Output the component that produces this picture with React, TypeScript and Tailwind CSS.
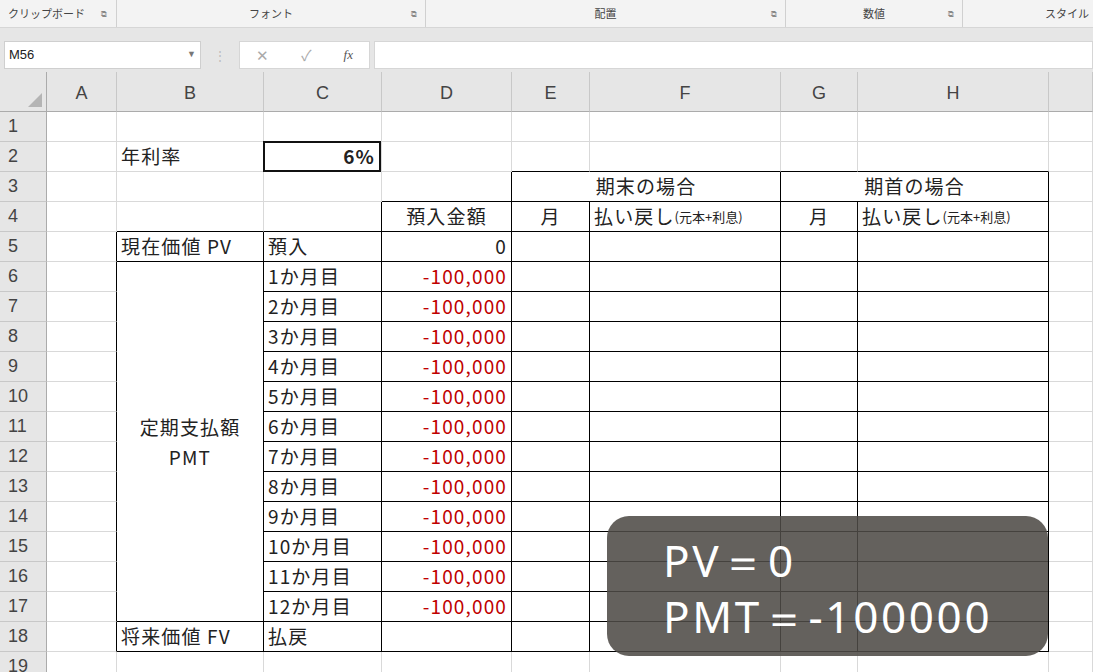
import React from "react"

const cols = [70, 147, 118, 130, 78, 191, 77, 191, 44]
const letters = ["A", "B", "C", "D", "E", "F", "G", "H", ""]
const font = { fontFamily: '"Noto Sans CJK JP", "Noto Sans", sans-serif' }

type Cell = { r: number; c: number; rs?: number; cs?: number; text?: string; align?: string; red?: boolean; small?: React.ReactNode }

// table region: rows 3-18, cols (1=A..8=H)
function inTable(r: number, c: number) {
  if (r === 3) return c >= 5 && c <= 8
  if (r === 4) return c >= 4 && c <= 8
  if (r >= 5 && r <= 18) return c >= 2 && c <= 8
  return false
}

export default function App() {
  const cells: Cell[] = []
  const merged = new Set<string>()
  const add = (cell: Cell) => {
    cells.push(cell)
    for (let i = 0; i < (cell.rs || 1); i++)
      for (let j = 0; j < (cell.cs || 1); j++) merged.add(`${cell.r + i}-${cell.c + j}`)
  }
  add({ r: 2, c: 2, text: "年利率", align: "left" })
  add({ r: 3, c: 5, cs: 2, text: "期末の場合", align: "center" })
  add({ r: 3, c: 7, cs: 2, text: "期首の場合", align: "center" })
  add({ r: 4, c: 4, text: "預入金額", align: "center" })
  add({ r: 4, c: 5, text: "月", align: "center" })
  add({ r: 4, c: 6, small: <>払い戻し<span className="text-[13px] tracking-normal">(元本+利息)</span></>, align: "left" })
  add({ r: 4, c: 7, text: "月", align: "center" })
  add({ r: 4, c: 8, small: <>払い戻し<span className="text-[13px] tracking-normal">(元本+利息)</span></>, align: "left" })
  add({ r: 5, c: 2, text: "現在価値 PV", align: "left" })
  add({ r: 5, c: 3, text: "預入", align: "left" })
  add({ r: 5, c: 4, text: "0", align: "right" })
  add({ r: 6, c: 2, rs: 12, small: <div className="text-center leading-[30px]">定期支払額<br />PMT</div>, align: "center" })
  for (let m = 1; m <= 12; m++) {
    add({ r: 5 + m, c: 3, text: `${m}か月目`, align: "left" })
    add({ r: 5 + m, c: 4, text: "-100,000", align: "right", red: true })
  }
  add({ r: 18, c: 2, text: "将来価値 FV", align: "left" })
  add({ r: 18, c: 3, text: "払戻", align: "left" })

  const all: Cell[] = [...cells]
  for (let r = 1; r <= 19; r++)
    for (let c = 1; c <= 9; c++) if (!merged.has(`${r}-${c}`)) all.push({ r, c })

  const rowsCount = 19

  return (
    <div className="w-[1093px] h-[672px] overflow-hidden bg-white relative text-[#222]" style={font}>
      {/* ribbon */}
      <div className="h-[28px] bg-[#f3f3f3] border-b border-[#d6d6d6] flex text-[11px] text-[#444]">
        <div className="w-[117px] border-r border-[#d0d0d0] flex items-center pl-2 gap-4"><span>クリップボード</span><span className="text-[8px] text-[#888]">⧉</span></div>
        <div className="w-[309px] border-r border-[#d0d0d0] flex items-center justify-center relative">フォント<span className="absolute right-2 text-[8px] text-[#888]">⧉</span></div>
        <div className="w-[360px] border-r border-[#d0d0d0] flex items-center justify-center relative">配置<span className="absolute right-2 text-[8px] text-[#888]">⧉</span></div>
        <div className="w-[177px] border-r border-[#d0d0d0] flex items-center justify-center relative">数値<span className="absolute right-2 text-[8px] text-[#888]">⧉</span></div>
        <div className="flex-1 flex items-center justify-end pr-1">スタイル</div>
      </div>
      {/* formula bar */}
      <div className="h-[44px] bg-[#e6e6e6] flex items-start pt-[13px] gap-1 pl-[4px]">
        <div className="w-[197px] h-[28px] bg-white border border-[#cfcfcf] flex items-center justify-between px-1 text-[13px]" style={{ fontFamily: '"Liberation Sans", sans-serif' }}>
          <span>M56</span><span className="text-[9px] text-[#777]">▼</span>
        </div>
        <div className="w-[30px] h-[28px] flex items-center justify-center text-[#bbb] text-[12px]">⋮</div>
        <div className="w-[131px] h-[28px] bg-white border border-[#d6d6d6] flex items-center justify-around text-[#aaa] text-[15px]">
          <span>✕</span><span>✓</span><span className="italic text-[#555] text-[13px]" style={{ fontFamily: '"Liberation Serif", serif' }}>fx</span>
        </div>
        <div className="flex-1 h-[28px] bg-white border border-[#d6d6d6]" />
      </div>
      {/* sheet */}
      <div
        className="grid"
        style={{ gridTemplateColumns: `47px ${cols.map(w => w + "px").join(" ")}`, gridTemplateRows: `40px repeat(${rowsCount}, 30px)` }}
      >
        <div className="bg-[#e6e6e6] border-r border-b border-[#ababab] flex items-end justify-end p-1" style={{ gridRow: 1, gridColumn: 1 }}>
          <div className="w-0 h-0 border-l-[14px] border-l-transparent border-b-[14px] border-b-[#b4b4b4]" />
        </div>
        {letters.map((l, i) => (
          <div key={l + i} className="bg-[#e6e6e6] border-r border-b border-r-[#c8c8c8] border-b-[#ababab] flex items-end justify-center pb-[4px] text-[18px] text-[#444]" style={{ gridRow: 1, gridColumn: i + 2, fontFamily: '"Liberation Sans", sans-serif' }}>{l}</div>
        ))}
        {Array.from({ length: rowsCount }, (_, i) => (
          <div key={"r" + i} className="bg-[#e6e6e6] border-r border-b border-r-[#ababab] border-b-[#c8c8c8] flex items-center pl-[8px] text-[18px] text-[#444]" style={{ gridRow: i + 2, gridColumn: 1, fontFamily: '"Liberation Sans", sans-serif' }}>{i + 1}</div>
        ))}
        {all.map(cell => {
          const rs = cell.rs || 1, cs = cell.cs || 1
          const lastR = cell.r + rs - 1, lastC = cell.c + cs - 1
          const t = inTable(cell.r, cell.c)
          const rightBlack = t || inTable(cell.r, lastC + 1)
          const bottomBlack = t || inTable(lastR + 1, cell.c)
          const c2 = cell.r === 2 && cell.c === 3
          const justify = cell.align === "right" ? "justify-end pr-[4px]" : cell.align === "center" ? "justify-center" : "justify-start pl-[4px]"
          return (
            <div
              key={`${cell.r}-${cell.c}`}
              className={`flex items-center text-[19px] tracking-[0.06em] whitespace-nowrap overflow-visible border-r border-b ${justify} ${rightBlack ? "border-r-black" : "border-r-[#d9d9d9]"} ${bottomBlack ? "border-b-black" : "border-b-[#d9d9d9]"} ${cell.red ? "text-[#c00000]" : ""}`}
              style={{ gridRow: `${cell.r + 1} / span ${rs}`, gridColumn: `${cell.c + 1} / span ${cs}` }}
            >
              {c2 ? (
                <div className="-ml-[5px] w-[119px] h-[31px] border-2 border-[#111] flex items-center justify-end pr-[4px] font-semibold">6%</div>
              ) : (
                cell.small || cell.text
              )}
            </div>
          )
        })}
      </div>
      {/* overlay */}
      <div className="absolute left-[607px] top-[516px] w-[441px] h-[140px] rounded-[22px] bg-[#4f4b47]/[0.88] text-white text-[44px] leading-[56px] pl-[56px] pt-[16px] tracking-[0.06em]" style={{ fontFamily: '"Noto Sans", sans-serif', fontWeight: 400 }}>
        <div>PV＝0</div>
        <div>PMT＝-100000</div>
      </div>
    </div>
  )
}
